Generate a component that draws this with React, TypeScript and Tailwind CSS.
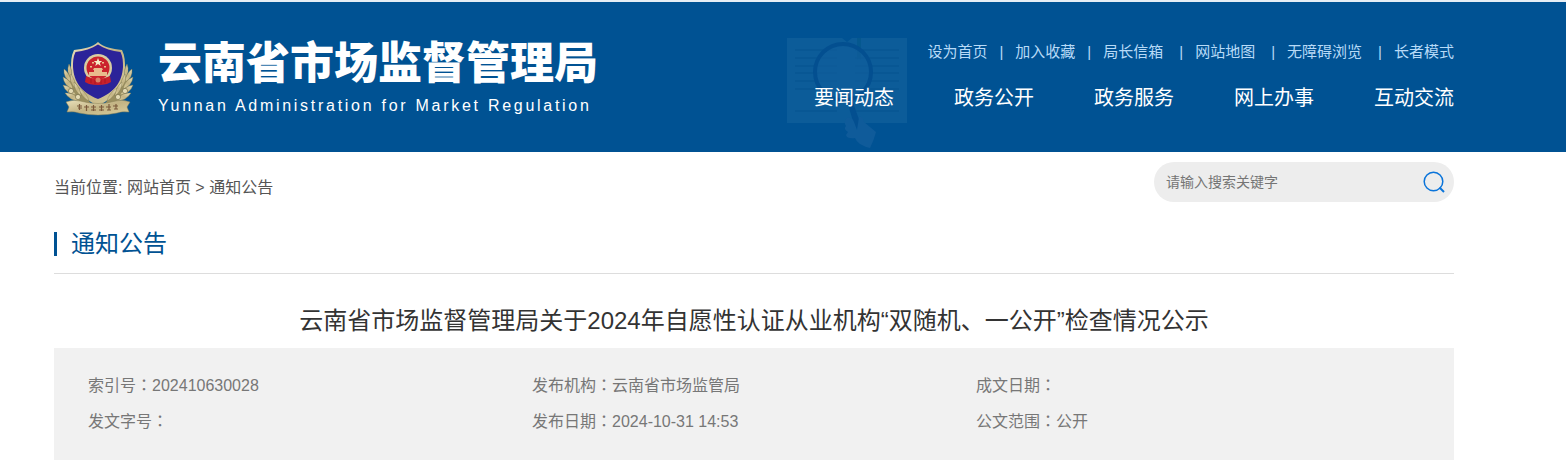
import { useState } from "react";

const quickLinks = [
  { label: "设为首页", wide: false },
  { label: "加入收藏", wide: false },
  { label: "局长信箱", wide: false },
  { label: "网站地图", wide: true },
  { label: "无障碍浏览", wide: true },
  { label: "长者模式", wide: true },
];

const navItems = ["要闻动态", "政务公开", "政务服务", "网上办事", "互动交流"];

const meta = [
  { label: "索引号", value: "202410630028" },
  { label: "发布机构", value: "云南省市场监管局" },
  { label: "成文日期", value: "" },
  { label: "发文字号", value: "" },
  { label: "发布日期", value: "2024-10-31 14:53" },
  { label: "公文范围", value: "公开" },
];

// left wheat ear, mirrored for the right side
function WheatEar() {
  return (
    <g>
      <path d="M5 40q2 14 12 24l14 2-14-18L8 34z" fill="#9a8f5f" />
      <g fill="url(#gold)" stroke="#7c7349" strokeWidth="0.400">
        <path d="M7 24q4 6 2 14-5-6-2-14z" />
        <path d="M2 29q6 4 7 13-8-4-7-13z" />
        <path d="M1 37q8 3 10 12-9-3-10-12z" />
        <path d="M1 45q9 1 13 10-10-1-13-10z" />
        <path d="M3 53q9-1 15 7-9 2-15-7z" />
        <path d="M9 34q5 6 4 14-6-6-4-14z" />
        <path d="M12 42q7 6 7 14-7-5-7-14z" />
        <path d="M17 48q8 5 10 13-8-4-10-13z" />
      </g>
      <g fill="#e4dbb4" stroke="#776e49" strokeWidth="0.700">
        <circle cx="9" cy="51" r="2.600" />
        <circle cx="16" cy="57" r="2.600" />
      </g>
    </g>
  );
}

function Emblem() {
  return (
    <svg viewBox="0 0 72 76" className="h-[76px] w-[72px] shrink-0" aria-hidden="true">
      <defs>
        <linearGradient id="gold" x1="0" y1="0" x2="1" y2="1">
          <stop offset="0" stopColor="#e9e0bb" />
          <stop offset="0.5" stopColor="#c3b484" />
          <stop offset="1" stopColor="#dbcf9f" />
        </linearGradient>
      </defs>
      {/* shield */}
      <path
        d="M36 2c5 5 14 7 24 8 3 6 3 12 3 18-1 16-8 28-27 38C17 56 10 44 9 28c0-6 0-12 3-18 10-1 19-3 24-8z"
        fill="url(#gold)"
      />
      <path
        d="M36 4.500c6 4 14 6.500 22.500 7.500 2.500 5 2.500 10 2.500 15-1 15-8 25-25 32C19 52 12 42 11 27c0-5 0-10 2.500-15C22 11 30 8.500 36 4.500z"
        fill="#2b2399"
      />
      <WheatEar />
      <g transform="translate(72 0) scale(-1 1)">
        <WheatEar />
      </g>
      {/* national emblem */}
      <circle cx="36" cy="28" r="14" fill="#d9cda2" />
      <circle cx="36" cy="28" r="11.500" fill="#cb222d" />
      <path d="m36 18 1.200 3h3l-2.400 2 1 3-2.800-2-2.800 2 1-3-2.400-2h3z" fill="#f6edc8" />
      <path d="M30 22h2v1.500h-2zM40 22h2v1.500h-2zM28 26h2v1.500h-2zM42 26h2v1.500h-2z" fill="#e9c08b" />
      <path d="M32 28h8l1 2h-1v2h5v4H27v-4h5v-2h-1z" fill="#e9ba8c" />
      <path d="M24 36q12 6 24 0l1 6-4 2q-9 2-18 0l-4-2z" fill="#c8202b" />
      <path d="M29 39v4M33 40v4M39 40v4M43 39v4" stroke="#a91720" />
      <circle cx="36" cy="40" r="2.500" fill="#d98067" />
      {/* ribbon */}
      <path
        d="M4 62q7-3 14-1 18 5 36 0 7-2 14 1l-3 5 2 5q-7-1-12 1-19 4-38 0-5-2-12-1l2-5z"
        fill="url(#gold)"
        stroke="#8d8256"
        strokeWidth="0.500"
      />
      <path
        d="M15 66h5M17.500 64v6M16 68h4M22 67h5M24.500 65v6M29 67h5M29 70h5M31.500 65v6M37 67h5M37 70h5M39.500 65v6M44 67h5M45 70h4M47 64v6M51 66h5M52 69h4M54 64v5"
        stroke="#7b5a3c"
        strokeWidth="1.200"
      />
    </svg>
  );
}

function BookBackdrop() {
  return (
    <svg viewBox="0 0 125 115" className="h-[115px] w-[125px]" aria-hidden="true">
      <path d="M1 4h55l5 4 5-4h55v85H1z" fill="#0c5c99" />
      <path
        d="M9 16h42M9 24h42M9 32h42M9 39h42M9 47h42M9 55h42M9 77h42M69 16h44M69 24h44M69 32h44M69 39h44M69 47h44M69 55h44M69 77h44"
        stroke="#075593"
        strokeWidth="1.500"
      />
      <path d="M71 4h4v22l-2-3-2 3z" fill="#05588f" />
      <circle cx="57" cy="38" r="28" fill="#115e9c" fillOpacity="0.600" stroke="#034f90" strokeWidth="4" />
      <path d="m61 67 5-1 9 25-6 3z" fill="#034f90" />
      <path d="M61 84q5-1 7 4l3 8 2-13q4-1 5 5l12 10q-2 8-6 16-5-1-10-4-4-3-5-6-8 1-9-3l2-3q-5-3-2-6-3-4 1-8z" fill="#0f5b9a" />
    </svg>
  );
}

function Header() {
  return (
    <header className="border-t-2 border-[#e6eef5] bg-[#005293]">
      <div className="flex h-[150px] justify-between pr-28 pl-[62px]">
        <a href="#" className="flex items-start gap-6 self-start pt-[38px] text-white">
          <Emblem />
          <span className="flex flex-col">
            <span className="text-[44px] leading-12 font-black">云南省市场监督管理局</span>
            <span className="text-base leading-9 tracking-[0.17em]">Yunnan Administration for Market Regulation</span>
          </span>
        </a>

        <div className="flex flex-col items-end pt-9">
          <div className="flex text-[15px] leading-7 text-[#b7daf7]">
            {quickLinks.map((link, i) => (
              <span key={link.label} className="flex">
                {i > 0 && <span className={link.wide ? "pr-3 pl-4" : "px-3"}>|</span>}
                <a href="#">{link.label}</a>
              </span>
            ))}
          </div>
          <nav className="relative mt-4 flex gap-15 text-xl leading-8 text-white">
            <div className="absolute -top-12 -left-7">
              <BookBackdrop />
            </div>
            {navItems.map((item) => (
              <a key={item} href="#" className="relative">
                {item}
              </a>
            ))}
          </nav>
        </div>
      </div>
    </header>
  );
}

function SearchBox() {
  const [query, setQuery] = useState("");

  return (
    <form
      className="flex h-10 w-[300px] items-center rounded-full bg-[#ededed] pr-2 pl-3"
      onSubmit={(e) => e.preventDefault()}
    >
      <input
        type="text"
        aria-label="请输入搜索关键字"
        placeholder="请输入搜索关键字"
        value={query}
        onChange={(e) => setQuery(e.target.value)}
        className="min-w-0 flex-1 bg-transparent text-sm text-[#333] outline-none placeholder:text-[#757575]"
      />
      <button type="submit" aria-label="搜索">
        <svg viewBox="0 0 24 24" className="size-6" fill="none" stroke="#0a74da" strokeWidth="1.500">
          <circle cx="11.500" cy="11.500" r="9.300" />
          <path d="m17.500 17.500 4.500 4.500" strokeWidth="2" />
        </svg>
      </button>
    </form>
  );
}

export default function App() {
  return (
    <div className="bg-white font-['Liberation_Sans','Noto_Sans_CJK_SC',sans-serif] text-[#555]">
      <Header />
      <main className="pr-28 pl-[54px]">
        <div className="flex justify-between pt-[10px]">
          <div className="pt-3 text-base leading-7">
            当前位置: <a href="#">网站首页</a> &gt; <a href="#">通知公告</a>
          </div>
          <SearchBox />
        </div>

        <div className="mt-3 flex h-15 items-center border-b border-[#ddd]">
          <h2 className="border-l-3 border-[#005293] pl-[14px] text-2xl leading-6 text-[#005293]">通知公告</h2>
        </div>

        <h1 className="pt-7 pb-2 text-center text-2xl leading-[38px] text-[#333]">
          云南省市场监督管理局关于2024年自愿性认证从业机构“双随机、一公开”检查情况公示
        </h1>

        <dl className="grid grid-cols-3 bg-[#f1f1f1] px-[34px] py-5 text-base leading-9 text-[#777]">
          {meta.map((item) => (
            <div key={item.label} className="flex">
              <dt>
                {item.label}
                <span className="font-['Liberation_Sans','Noto_Sans_CJK_TC',sans-serif]">：</span>
              </dt>
              <dd>{item.value}</dd>
            </div>
          ))}
        </dl>
      </main>
    </div>
  );
}
